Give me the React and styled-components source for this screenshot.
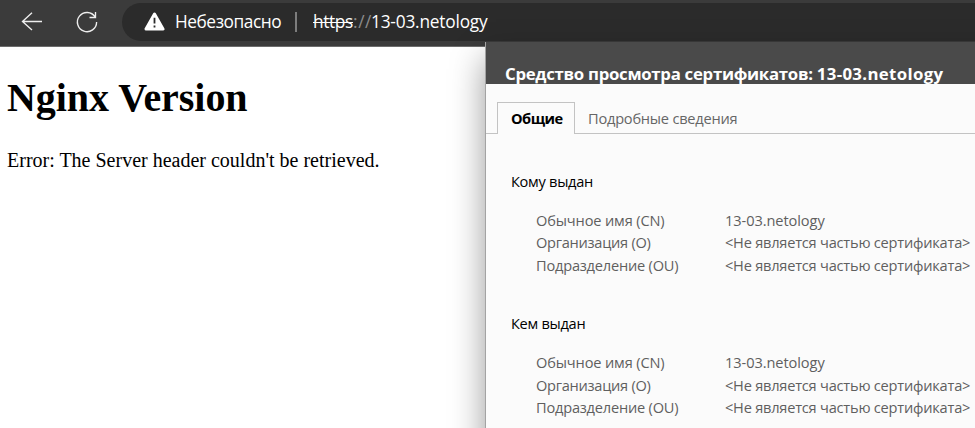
import React from "react";
import styled, { createGlobalStyle } from "styled-components";

const GlobalStyle = createGlobalStyle`
  * { box-sizing: border-box; }
  body { margin: 0; background: #fff; overflow: hidden; }
`;

const Browser = styled.div`
  position: relative;
  width: 975px;
  height: 428px;
  overflow: hidden;
  background: #fff;
  font-family: "Open Sans", "Noto Sans", sans-serif;
  white-space: nowrap;
`;

const Toolbar = styled.header`
  display: flex;
  align-items: flex-start;
  height: 47px;
  padding-left: 20px;
  background: #3b3b3b;
  border-bottom: 1px solid #6c6c6c;
`;

const NavButton = styled.span`
  display: flex;
  width: ${(p) => p.$width}px;
  height: 44px;
  align-items: center;
`;

const AddressBar = styled.div`
  display: flex;
  align-items: center;
  flex: 1;
  height: 38px;
  margin-top: 3px;
  padding-left: 22px;
  border-radius: 19px 0 0 19px;
  background: #2b2b2b;
  color: #fff;
  font-size: 17.3px;
  line-height: 24px;
`;

const Label = styled.span`
  letter-spacing: ${(p) => p.$track || 0}px;
`;

const SecurityLabel = styled(Label)`
  width: 120px;
  margin-left: 10px;
`;

const Divider = styled.i`
  width: 2px;
  height: 20px;
  margin-right: 16px;
  background: #7d7d7d;
`;

const Scheme = styled(Label)`
  width: 40px;
  text-decoration: line-through;
  text-decoration-thickness: 1px;
`;

const Slashes = styled(Label)`
  width: 18px;
  color: #8b8b8b;
`;

const Page = styled.main`
  padding: 28px 7px;
  color: #000;
  font-family: "Liberation Serif", serif;
`;

const Heading = styled.h1`
  margin: 0;
  font-size: 40px;
  line-height: 46px;
  letter-spacing: -0.05px;
`;

const Message = styled.p`
  margin: 28px 0 0;
  font-size: 20px;
  line-height: 23px;
`;

const Dialog = styled.section`
  position: absolute;
  top: 42px;
  left: 485px;
  width: 520px;
  height: 420px;
  background: #fbfbfb;
  border-left: 1px solid #a3a3a3;
  box-shadow: 0 16px 32px rgba(0, 0, 0, 0.4);
`;

const DialogTitle = styled.h2`
  height: 42px;
  margin: 0;
  padding: 20px 0 0 19px;
  overflow: hidden;
  background: #4a4a4a;
  color: #fff;
  font-size: 16.8px;
  line-height: 24px;
  font-weight: 700;
`;

const Tabs = styled.div`
  display: flex;
  height: 50px;
  padding: 18px 0 0 11px;
  box-shadow: inset 0 -1px #c3c3c3;
`;

const Tab = styled.div`
  height: 32px;
  padding: 0 13px;
  width: ${(p) => (p.$active ? "78px" : "auto")};
  border: ${(p) => (p.$active ? "1px solid #c3c3c3" : "0")};
  border-bottom: 0;
  background: ${(p) => (p.$active ? "#fbfbfb" : "transparent")};
  color: ${(p) => (p.$active ? "#000" : "#666")};
  font-size: 14.6px;
  font-weight: ${(p) => (p.$active ? 700 : 400)};
  line-height: ${(p) => (p.$active ? 31 : 33)}px;
`;

const Group = styled.section`
  height: 142.4px;
  padding: 35.9px 0 0 25px;
  font-size: 14.6px;
`;

const GroupTitle = styled.h3`
  margin: 0 0 17px;
  color: #000;
  font-size: 14.6px;
  font-weight: 400;
  line-height: 22px;
`;

const Fields = styled.dl`
  display: grid;
  grid-template-columns: 189px auto;
  grid-auto-rows: 22.5px;
  margin: 0;
  padding-left: 25px;
  color: #5f5f5f;
  line-height: 22px;
`;

const Value = styled.dd`
  margin: 0;
`;

const groups = ["Кому выдан", "Кем выдан"];

const fields = [
  { name: "Обычное имя (CN)", value: "13-03.netology", nameTrack: -0.14, valueTrack: -0.08 },
  { name: "Организация (O)", value: "<Не является частью сертификата>", nameTrack: -0.27, valueTrack: -0.22 },
  { name: "Подразделение (OU)", value: "<Не является частью сертификата>", nameTrack: -0.21, valueTrack: -0.22 },
];

function BackIcon() {
  return (
    <svg width="24" height="24" viewBox="0 0 24 24" fill="none" stroke="#eee" strokeWidth="1.35">
      <path d="M22 11.5H2.5M12 2.8 2.5 11.5 12 20" />
    </svg>
  );
}

function ReloadIcon() {
  return (
    <svg width="24" height="24" viewBox="0 0 24 24" fill="none" stroke="#eee" strokeWidth="1.35">
      <path d="M20.1 6.9A9.6 9.6 0 1 0 21.6 12M20.5 2V7.5H14.5" />
    </svg>
  );
}

function WarningIcon() {
  return (
    <svg width="21" height="20" viewBox="0 0 21 20">
      <path d="M10.5 2 19 17H2Z" fill="#fff" stroke="#fff" strokeWidth="3" strokeLinejoin="round" />
      <path d="M10.5 5.8V11.5M10.5 13.5V15.5" stroke="#2b2b2b" strokeWidth="1.8" />
    </svg>
  );
}

export default function App() {
  return (
    <Browser>
      <GlobalStyle />
      <Toolbar>
        <NavButton $width={55}><BackIcon /></NavButton>
        <NavButton $width={47}><ReloadIcon /></NavButton>
        <AddressBar>
          <WarningIcon />
          <SecurityLabel $track={-0.45}>Небезопасно</SecurityLabel>
          <Divider />
          <Scheme $track={-0.35}>https</Scheme>
          <Slashes $track={0.6}>://</Slashes>
          <Label $track={-0.2}>13-03.netology</Label>
        </AddressBar>
      </Toolbar>
      <Page>
        <Heading>Nginx Version</Heading>
        <Message>Error: The Server header couldn't be retrieved.</Message>
      </Page>
      <Dialog>
        <DialogTitle>
          <Label $track={-0.29}>Средство просмотра сертификатов: </Label>
          <Label $track={0.36}>13-03.netology</Label>
        </DialogTitle>
        <Tabs>
          <Tab $active><Label $track={-0.5}>Общие</Label></Tab>
          <Tab><Label $track={-0.22}>Подробные сведения</Label></Tab>
        </Tabs>
        {groups.map((title) => (
          <Group key={title}>
            <GroupTitle><Label $track={-0.28}>{title}</Label></GroupTitle>
            <Fields>
              {fields.map((field) => (
                <React.Fragment key={field.name}>
                  <dt><Label $track={field.nameTrack}>{field.name}</Label></dt>
                  <Value><Label $track={field.valueTrack}>{field.value}</Label></Value>
                </React.Fragment>
              ))}
            </Fields>
          </Group>
        ))}
      </Dialog>
    </Browser>
  );
}
